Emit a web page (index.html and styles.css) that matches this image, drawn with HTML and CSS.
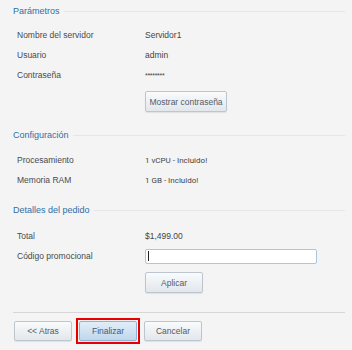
FILE: index.html
```html
<!DOCTYPE html>
<html lang="es">
<head>
    <meta charset="UTF-8">
    <meta name="viewport" content="width=device-width, initial-scale=1.0">
    <title>Pedido del servidor</title>
    <link rel="stylesheet" href="styles.css">
</head>
<body>
    <div class="wrap">
        <div class="section-title"><span>Parámetros</span><i class="rule"></i></div>
        <div class="rows first">
            <div class="row"><span class="label">Nombre del servidor</span><span class="value">Servidor1</span></div>
            <div class="row"><span class="label">Usuario</span><span class="value">admin</span></div>
            <div class="row"><span class="label">Contraseña</span><span class="value stars">********</span></div>
            <div class="row-btn"><button class="btn btn-show">Mostrar contraseña</button></div>
        </div>

        <div class="section-title"><span>Configuración</span><i class="rule"></i></div>
        <div class="rows">
            <div class="row"><span class="label">Procesamiento</span><span class="value alt">1 vCPU - Incluido!</span></div>
            <div class="row"><span class="label">Memoria RAM</span><span class="value alt">1 GB - Incluido!</span></div>
        </div>

        <div class="section-title gap"><span>Detalles del pedido</span><i class="rule"></i></div>
        <div class="rows last">
            <div class="row"><span class="label">Total</span><span class="value">$1,499.00</span></div>
            <div class="row"><span class="label">Código promocional</span><div class="input-box"><span class="caret"></span></div></div>
            <div class="row-btn"><button class="btn btn-apply">Aplicar</button></div>
        </div>

        <div class="actions">
            <button class="btn btn-nav">&lt;&lt; Atras</button>
            <span class="highlight"><button class="btn btn-nav btn-primary">Finalizar</button></span>
            <button class="btn btn-nav">Cancelar</button>
        </div>
    </div>
</body>
</html>
```

FILE: styles.css
```css
body {
    margin: 0;
    background: #f4f4f4;
    font-family: "Liberation Sans", Arial, sans-serif;
    font-size: 8.5px;
    color: #4a4a4a;
}
.wrap {
    padding: 4px 7px 0 13px;
}
.section-title {
    display: flex;
    align-items: center;
    gap: 4px;
    height: 14px;
    color: #2f6fa5;
    font-size: 9px;
}
.section-title.gap {
    margin-top: 13px;
}
.rule {
    flex: 1;
    border-top: 1px solid #e6e6e6;
}
.rows {
    padding-left: 4px;
    margin-top: 8px;
}
.rows.first {
    margin-top: 7px;
    margin-bottom: 16px;
}
.rows.last {
    margin-top: 9px;
}
.row {
    display: flex;
    align-items: center;
    height: 20px;
}
.label {
    width: 128px;
}
.value {
    color: #444;
}
.value.alt {
    font-family: Roboto, "Liberation Sans", sans-serif;
    font-size: 8px;
}
.stars {
    font-size: 7px;
    letter-spacing: -0.3px;
}
.row-btn {
    padding-left: 128px;
    margin-top: 6px;
}
.btn {
    font-family: "Liberation Sans", Arial, sans-serif;
    font-size: 8.5px;
    color: #555a66;
    background: linear-gradient(#f9fbfc, #e2e7ec);
    border: 1px solid #bcc6d0;
    border-radius: 2px;
    box-shadow: 0 1px 1px rgba(0, 0, 0, 0.08);
    padding: 0;
    height: 21px;
    cursor: pointer;
}
.btn-show {
    width: 82px;
}
.btn-apply {
    width: 58px;
}
.input-box {
    width: 168px;
    height: 13px;
    background: #fff;
    border: 1px solid #a9c7df;
    border-radius: 2px;
    display: flex;
    align-items: center;
    padding-left: 2px;
}
.caret {
    width: 1px;
    height: 10px;
    background: #222;
}
.actions {
    margin-top: 19px;
    border-top: 1px solid #d6d6d6;
    padding-top: 5px;
    display: flex;
    align-items: center;
    gap: 4px;
    padding-left: 1px;
}
.btn-nav {
    width: 58px;
    height: 20px;
}
.highlight {
    display: flex;
    border: 2px solid #e60000;
    padding: 1px;
}
.btn-primary {
    background: linear-gradient(#e2eef8, #bed7ec);
    border-color: #92b4d2;
    color: #3d5a7a;
}
```
